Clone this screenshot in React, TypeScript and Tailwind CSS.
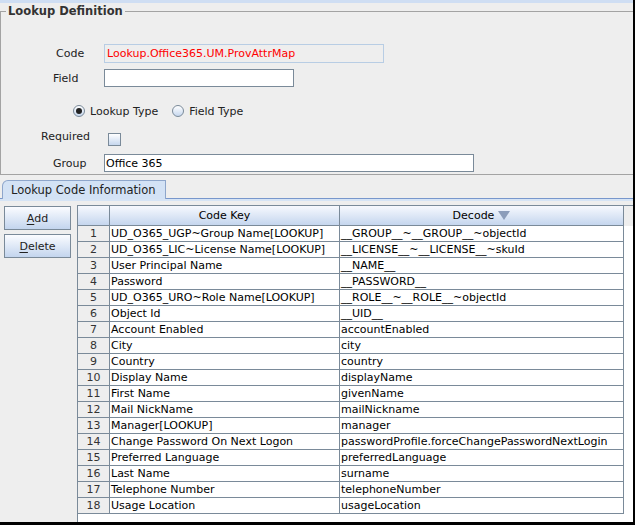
import React from "react";

const ROWS: [string, string][] = [
  ["UD_O365_UGP~Group Name[LOOKUP]", "__GROUP__~__GROUP__~objectId"],
  ["UD_O365_LIC~License Name[LOOKUP]", "__LICENSE__~__LICENSE__~skuId"],
  ["User Principal Name", "__NAME__"],
  ["Password", "__PASSWORD__"],
  ["UD_O365_URO~Role Name[LOOKUP]", "__ROLE__~__ROLE__~objectId"],
  ["Object Id", "__UID__"],
  ["Account Enabled", "accountEnabled"],
  ["City", "city"],
  ["Country", "country"],
  ["Display Name", "displayName"],
  ["First Name", "givenName"],
  ["Mail NickName", "mailNickname"],
  ["Manager[LOOKUP]", "manager"],
  ["Change Password On Next Logon", "passwordProfile.forceChangePasswordNextLogin"],
  ["Preferred Language", "preferredLanguage"],
  ["Last Name", "surname"],
  ["Telephone Number", "telephoneNumber"],
  ["Usage Location", "usageLocation"],
];

function Radio({ checked, label }: { checked?: boolean; label: string }) {
  return (
    <div className="flex items-center gap-[5px]">
      <span className="flex h-[12px] w-[12px] items-center justify-center rounded-full border border-[#7a8a99] bg-linear-to-b from-[#ffffff] to-[#c6d7ee]">
        {checked && <span className="h-[6px] w-[6px] rounded-full bg-[#222]" />}
      </span>
      <span>{label}</span>
    </div>
  );
}

function Button({ mnemonic, rest }: { mnemonic: string; rest: string }) {
  return (
    <button className="flex h-[24px] w-[67px] items-center justify-center border border-[#7a8a99] bg-linear-to-b from-[#fbfcff] to-[#c3d5ee] text-[11px] text-[#222]">
      <span className="underline underline-offset-2">{mnemonic}</span>
      {rest}
    </button>
  );
}

export default function App() {
  return (
    <div className="flex h-[525px] w-[635px] flex-col overflow-hidden border-r-2 border-b-[3px] border-black bg-[#eeeeee] font-['DejaVu_Sans',sans-serif] text-[11px] leading-[15px] text-[#222]">
      <div className="h-[3px] bg-[#cfdef3]" />

      {/* Lookup Definition */}
      <div className="relative mt-[8px] h-[164px] border-t border-b border-l border-[#a3a3a3] pt-[32px]">
        <span className="absolute top-[-8px] left-[5px] bg-[#eeeeee] px-[2px] text-[11.5px] font-bold text-[#333]">
          Lookup Definition
        </span>

        <div className="flex h-[19px] items-center">
          <div className="w-[103px] pl-[55px]">Code</div>
          <div className="flex h-[19px] w-[280px] items-center border border-[#b8cde4] pl-[2px] text-[#ff0000]">
            Lookup.Office365.UM.ProvAttrMap
          </div>
        </div>

        <div className="mt-[6px] flex h-[18px] items-center">
          <div className="w-[103px] pl-[52px]">Field</div>
          <div className="h-[18px] w-[190px] border border-[#7a8a99] bg-white" />
        </div>

        <div className="mt-[16px] flex h-[16px] items-center gap-[14px] pl-[72px]">
          <Radio checked label="Lookup Type" />
          <Radio label="Field Type" />
        </div>

        <div className="mt-[14px] flex h-[13px] items-center">
          <div className="mb-[6px] w-[103px] pl-[40px]">Required</div>
          <span className="ml-[4px] h-[13px] w-[13px] border border-[#7a8a99] bg-linear-to-b from-[#ffffff] to-[#c6d7ee]" />
        </div>

        <div className="mt-[8px] flex h-[18px] items-center">
          <div className="w-[103px] pl-[52px]">Group</div>
          <div className="flex h-[18px] w-[370px] items-center border border-[#7a8a99] bg-white pl-[1px] text-black">
            Office 365
          </div>
        </div>
      </div>

      {/* Tab */}
      <div className="mt-[5px] flex h-[19px]">
        <div className="w-[2px] border-b border-[#7897cc]" />
        <div className="flex w-[164px] items-center rounded-tl-[6px] border-t border-r border-l border-[#8ea6cb] bg-[#d3e2f5] pl-[8px] text-[11.5px] text-[#222]">
          Lookup Code Information
        </div>
        <div className="flex-1 border-b border-[#7897cc]" />
      </div>
      <div className="h-[2px] bg-[#d6e4f5]" />

      {/* Panel */}
      <div className="flex min-h-0 flex-1">
        <div className="mt-[5px] ml-[4px] flex flex-col gap-[4px]">
          <Button mnemonic="A" rest="dd" />
          <Button mnemonic="D" rest="elete" />
        </div>

        <div className="mt-[4px] ml-[6px] flex flex-1 flex-col border-t border-l border-[#7a8a99] bg-white text-black">
          <div className="flex h-[20px] bg-[#eeeeee]">
            <div className="w-[32px] border-r border-b border-[#7a8a99] bg-linear-to-b from-[#f7f9fe] to-[#c5d6ee]" />
            <div className="flex w-[230px] items-center justify-center border-r border-b border-[#7a8a99] bg-linear-to-b from-[#f7f9fe] to-[#c5d6ee]">
              Code Key
            </div>
            <div className="flex w-[284px] items-center justify-center gap-[4px] border-r border-b border-[#7a8a99] bg-linear-to-b from-[#f7f9fe] to-[#c5d6ee]">
              <span>Decode</span>
              <svg width="12" height="9" viewBox="0 0 12 9">
                <polygon points="0,0 12,0 6,9" fill="#8c9dba" />
              </svg>
            </div>
          </div>

          {ROWS.map(([key, decode], i) => (
            <div key={i} className="flex h-[16px]">
              <div className="w-[32px] border-r border-b border-[#7a8a99] bg-[#eeeeee] text-center text-[#333]">
                {i + 1}
              </div>
              <div className="w-[230px] overflow-hidden border-r border-b border-[#7a8a99] pl-[1px] whitespace-nowrap">
                {key}
              </div>
              <div className="w-[284px] overflow-hidden border-r border-b border-[#7a8a99] pl-[1px] whitespace-nowrap">
                {decode}
              </div>
            </div>
          ))}
        </div>
      </div>
    </div>
  );
}
